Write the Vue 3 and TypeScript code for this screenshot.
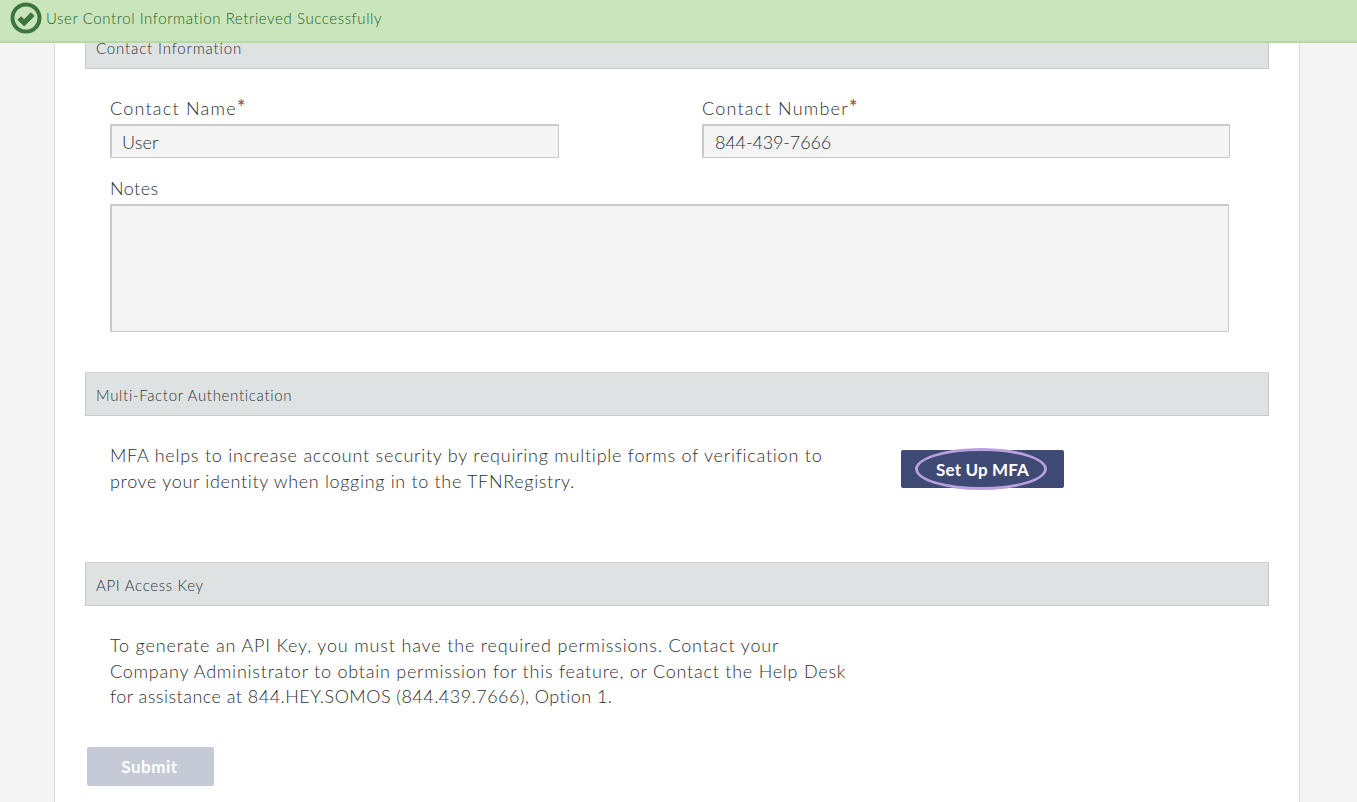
<script setup lang="ts">
const title = 'User Control Information Retrieved Successfully'
</script>

<template>
  <div class="page">
    <div class="alert">
      <svg class="check" width="32" height="32" viewBox="0 0 32 32" aria-hidden="true">
        <circle cx="16" cy="16" r="13.5" fill="none" stroke="#3b7540" stroke-width="4" />
        <path d="M9.2 16l4.9 4.9 8.7-8.8" fill="none" stroke="#3b7540" stroke-width="5.2" />
      </svg>
      <span class="alert-text">{{ title }}</span>
    </div>
    <main class="card">
      <h2 class="bar first"><span>Contact Information</span></h2>
      <div class="contact-row">
        <label class="field name">
          <span class="label wide">Contact Name<em>*</em></span>
          <input class="input text" value="User" readonly />
        </label>
        <label class="field number">
          <span class="label wide">Contact Number<em>*</em></span>
          <input class="input digits" value="844-439-7666" readonly />
        </label>
      </div>
      <label class="field notes">
        <span class="label">Notes</span>
        <textarea class="area" readonly></textarea>
      </label>

      <h2 class="bar mfa-bar"><span>Multi-Factor Authentication</span></h2>
      <div class="mfa">
        <p class="copy mfa-copy">MFA helps to increase account security by requiring multiple forms of verification to<br /><span class="tight">prove your identity when logging in to the TFNRegistry.</span></p>
        <button class="btn-mfa" type="button"><span class="ring">Set Up MFA</span></button>
      </div>

      <h2 class="bar api-bar"><span>API Access Key</span></h2>
      <p class="copy api-copy"><span class="loose">To generate an API Key, you must have the required permissions. Contact your</span><br />Company Administrator to obtain permission for this feature, or Contact the Help Desk<br /><span class="numeric">for assistance at 844.HEY.SOMOS (844.439.7666), Option 1.</span></p>
      <button class="submit" type="button" disabled>Submit</button>
    </main>
  </div>
</template>

<style>
html, body { margin: 0; height: 100%; overflow: hidden; background: #f4f4f4; }
</style>

<style scoped>
.page {
  position: relative;
  height: 802px;
  overflow: hidden;
  background: #f4f4f4;
  font-family: "Lato", "Liberation Sans", sans-serif;
  font-weight: 300;
  color: #2c3033;
}
.alert {
  position: absolute;
  top: 0; left: 0; right: 0;
  height: 41px;
  border-bottom: 2px solid #b3dba3;
  background: #cae5bb;
  display: flex;
  align-items: center;
  padding-left: 10px;
  gap: 4px;
  color: #1f6428;
  font-size: 15px;
  letter-spacing: .59px;
  z-index: 2;
}
.alert-text { padding-bottom: 5px; }
.check { flex: none; margin-top: -5px; }
.card {
  box-sizing: border-box;
  width: 1246px;
  height: 802px;
  margin-left: 54px;
  padding: 26px 30px 0;
  background: #fff;
  border-left: 1px solid #dcdcdc;
  border-right: 1px solid #dcdcdc;
}
.bar {
  box-sizing: border-box;
  width: 1184px;
  height: 44px;
  margin: 0;
  padding: 2px 10px 0;
  display: flex;
  align-items: center;
  background: #dfe2e3;
  border: 1px solid #c8c9c9;
  border-top-color: #d2d4d4;
  font-size: 15px;
  font-weight: 300;
  letter-spacing: .68px;
  color: #2f3337;
}
.first { height: 43px; padding-top: 0; letter-spacing: .85px; }
.contact-row { display: flex; margin: 27px 0 0 25px; }
.field { display: flex; flex-direction: column; }
.name { width: 449px; margin-right: 143px; }
.number { width: 528px; }
.notes { width: 1119px; margin: 18px 0 0 25px; }
.label {
  height: 28px;
  font-size: 18px;
  line-height: 24px;
  letter-spacing: .45px;
}
.wide { letter-spacing: 1.22px; }
.label em { color: #8a4f3a; font-style: normal; font-size: 21px; line-height: 20px; font-weight: 400; }
.input, .area {
  box-sizing: border-box;
  display: block;
  width: 100%;
  margin: 0;
  background: #f4f4f4;
  border: 1px solid #c9c9c9;
  border-width: 2px 1px 1px 2px;
  border-radius: 1px;
  outline: 0;
  font-family: inherit;
  font-weight: 300;
  color: #2c3033;
}
.input {
  height: 34px;
  padding: 0 10px;
  font-size: 18px;
}
.text { letter-spacing: .15px; }
.digits { padding-left: 11px; letter-spacing: -.14px; }
.area { height: 128px; resize: none; }
.mfa-bar { margin-top: 40px; }
.mfa { position: relative; height: 146px; }
.copy {
  margin: 0;
  font-size: 18px;
  line-height: 25.5px;
  letter-spacing: .76px;
  white-space: nowrap;
}
.tight { letter-spacing: .67px; }
.loose { letter-spacing: .83px; }
.numeric { letter-spacing: .47px; }
.mfa-copy { padding: 27px 0 0 25px; }
.btn-mfa {
  position: absolute;
  top: 34px;
  left: 816px;
  width: 163px;
  height: 38px;
  padding: 0;
  border: 0;
  border-radius: 2px;
  background: #3f4a74;
  color: #fff;
  font-family: inherit;
  font-size: 17px;
  font-weight: 700;
  letter-spacing: .15px;
  display: flex;
  align-items: center;
  justify-content: center;
}
.ring {
  box-sizing: border-box;
  width: 132px;
  height: 42px;
  margin-right: 3px;
  padding-left: 3px;
  line-height: 37px;
  border: 3px solid #b8a1de;
  border-radius: 50%;
  text-align: center;
}
.api-copy { padding: 27px 0 0 25px; }
.submit {
  display: block;
  width: 127px;
  height: 39px;
  margin: 37px 0 0 2px;
  padding: 0 2px 0 0;
  border: 0;
  border-radius: 2px;
  background: #c6cad7;
  color: #fff;
  font-family: inherit;
  font-size: 17px;
  font-weight: 700;
  letter-spacing: .5px;
}
</style>
